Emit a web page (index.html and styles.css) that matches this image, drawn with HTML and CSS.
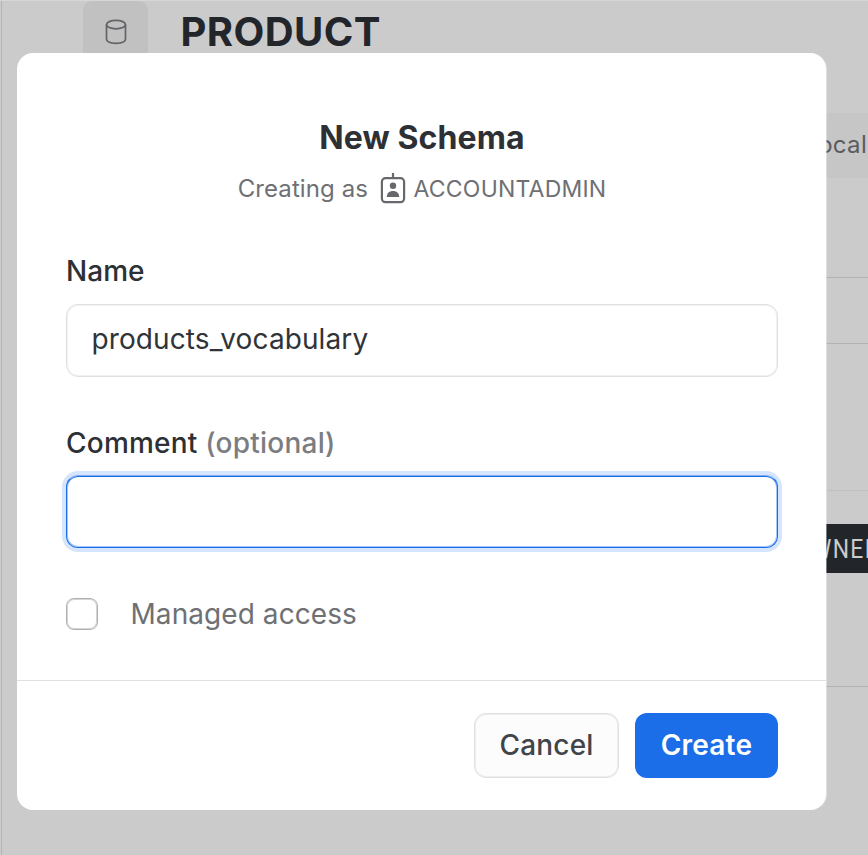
FILE: index.html
```html
<!DOCTYPE html>
<html lang="en">
<head>
<meta charset="utf-8">
<title>New Schema</title>
<link rel="stylesheet" href="styles.css">
</head>
<body>
<div class="page">
  <header class="page-header">
    <div class="db-tile">
      <svg class="db-icon" viewBox="0 0 22 26" fill="none" stroke="#636468" stroke-width="1.7"><ellipse cx="11" cy="5.6" rx="9.5" ry="4.2"/><path d="M1.500 5.600V20C1.500 22.800 5 24.300 11 24.300S20.500 22.800 20.500 20V5.600"/></svg>
    </div>
    <h1 class="page-title">PRODUCT</h1>
  </header>
  <div class="pill-row"><span class="pill">Local</span></div>
  <div class="row row-tabs"></div>
  <div class="row row-toolbar"></div>
  <div class="row row-head"></div>
  <div class="row row-owner"><div class="owner"><span class="owner-text">OWNER</span></div></div>
</div>
<div class="modal" role="dialog">
  <div class="modal-body">
    <h2 class="modal-title">New Schema</h2>
    <p class="subtitle"><span class="creating">Creating as</span>
      <svg class="role-icon" viewBox="0 0 26 32"><path d="M13 0V5" stroke="#66686c" stroke-width="2.200"/><rect x="1.900" y="5.200" width="22.200" height="24" rx="3.600" fill="none" stroke="#66686c" stroke-width="2.200"/><circle cx="13" cy="12.800" r="3.200" fill="#66686c"/><path d="M6.800 24C6.800 20 9.500 18 13 18S19.200 20 19.200 24Z" fill="#66686c"/></svg>
      <span class="role">ACCOUNTADMIN</span></p>
    <label class="label" for="name"><span class="name-text">Name</span></label>
    <input class="input" id="name" value="products_vocabulary">
    <label class="label label-comment" for="comment"><span class="comment-text">Comment <span class="optional">(optional)</span></span></label>
    <input class="input input-focus" id="comment">
    <div class="check"><span class="box"></span><span class="managed">Managed access</span></div>
  </div>
  <footer class="modal-footer">
    <button class="btn btn-cancel"><span>Cancel</span></button>
    <button class="btn btn-create"><span>Create</span></button>
  </footer>
</div>
</body>
</html>
```
FILE: styles.css
```css
* { box-sizing: border-box; }
body { margin: 0; width: 868px; height: 855px; overflow: hidden; font-family: Inter, "Liberation Sans", sans-serif; color: #2d3035; }
h1, h2, p { margin: 0; }
.page { height: 855px; background: #cbcbcb; border-top: 1px solid #d6d6d6; border-left: 1px solid #cbcbcb; box-shadow: inset 1px 0 #b5b5b5; overflow: hidden; }
.page-header { display: flex; height: 112px; padding-left: 82px; }
.db-tile { width: 65px; height: 65px; background: #c1c1c1; border-radius: 9px; display: flex; justify-content: center; padding-top: 18px; }
.db-icon { width: 22px; height: 26px; }
.page-title { margin-left: 32.500px; padding-top: 7px; font-size: 40px; line-height: 48px; font-weight: 700; color: #22262b; letter-spacing: .4px; }
.pill-row { height: 65px; display: flex; justify-content: flex-end; }
.pill { width: 90px; height: 65px; background: #c6c6c6; color: #5b5c5f; font-size: 24px; line-height: 64px; letter-spacing: .3px; text-align: right; padding-right: 1px; }
.row { margin-left: 82px; border-bottom: 1px solid #b2b2b2; }
.row-tabs { height: 100px; }
.row-toolbar { height: 66px; }
.row-head { height: 147px; border-color: #c0c0c0; }
.row-owner { height: 196px; padding-top: 33px; display: flex; justify-content: flex-end; align-items: flex-start; }
.owner { width: 90px; height: 49px; padding-left: 16px; overflow: hidden; background: #22262b; color: #cbcbcb; }
.owner-text { display: inline-block; font: 26px/50px Roboto, sans-serif; letter-spacing: 1.500px; transform: scaleX(.88); transform-origin: left; }
.modal { position: absolute; left: 17px; top: 53px; width: 809px; height: 757px; background: #fff; border-radius: 16px; box-shadow: 1px 0 rgba(255, 255, 255, .4); display: flex; flex-direction: column; }
.modal-body { height: 628px; padding: 64px 48px 0 49px; border-bottom: 1px solid #e0e0e0; display: flex; flex-direction: column; }
.modal-title { text-align: center; font-size: 32px; line-height: 41px; font-weight: 700; letter-spacing: .1px; }
.subtitle { display: flex; justify-content: center; align-items: center; height: 32px; margin-top: 15px; font-size: 24px; color: #6e7074; }
.creating { letter-spacing: .1px; line-height: 30px; }
.role-icon { width: 26px; height: 32px; margin: 0 7.500px 0 12px; }
.role { font-size: 23px; letter-spacing: .2px; }
.label { height: 40px; margin-top: 46px; font-size: 28px; line-height: 40px; font-weight: 500; }
.name-text { letter-spacing: .05px; }
.comment-text { letter-spacing: .23px; }
.optional { color: #7b7d81; }
.input { width: 712px; height: 73px; margin-top: 13px; padding: 0 25px 3px 24.500px; border: 1px solid #e0e0e0; border-radius: 12px; outline: 0; background: #fff; color: #303338; font: 28px Inter, sans-serif; letter-spacing: .1px; box-shadow: inset 0 0 0 1px #f2f2f2; }
.label-comment { margin-top: 46px; }
.input-focus { margin-top: 12px; border: 1px solid #1b6ee8; border-top-color: #80aff4; box-shadow: inset 0 1px #1b6ee8, inset 0 0 0 1px #a4c5f7, 0 0 0 4px #d5e5fd; }
.check { display: flex; align-items: center; height: 34px; margin-top: 49px; color: #6e7074; font-size: 28px; }
.box { width: 32px; height: 32px; border: 1px solid #b0b0b3; border-radius: 8px; margin-right: 32.500px; box-shadow: inset 0 0 0 1px #d5d5d7; }
.managed { letter-spacing: .07px; }
.modal-footer { display: flex; justify-content: flex-end; gap: 16px; padding: 32px 48px 0; }
.btn { height: 65px; border-radius: 12px; font: 500 28px Inter, sans-serif; letter-spacing: .2px; padding: 0 0 1px; }
.btn-cancel { width: 145px; background: #fcfcfc; border: 1px solid #e0e0e0; color: #414449; box-shadow: inset 0 0 0 1px #eeeeee; }
.btn-create { width: 143px; background: #1b6ee8; border: 0; color: #fff; font-weight: 600; }
```
